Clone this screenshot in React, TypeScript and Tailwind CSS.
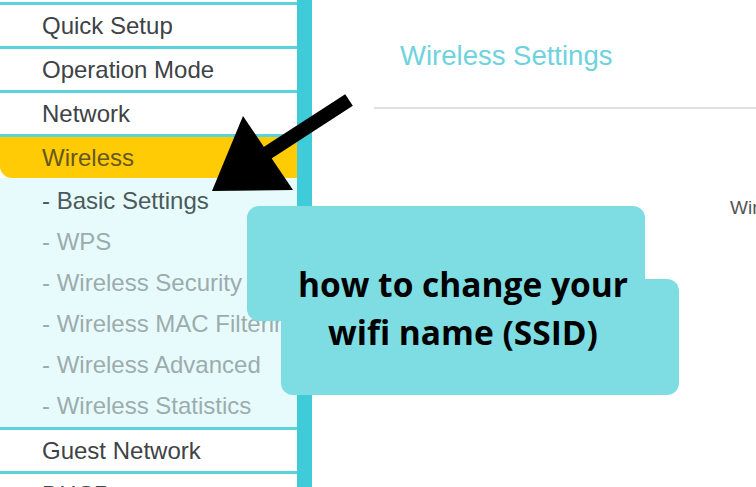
const menuTop = ["Quick Setup", "Operation Mode", "Network"];

const subItems = [
  { label: "- Basic Settings", active: true },
  { label: "- WPS" },
  { label: "- Wireless Security" },
  { label: "- Wireless MAC Filtering" },
  { label: "- Wireless Advanced" },
  { label: "- Wireless Statistics" },
];

const Line = () => <div className="h-[3px] bg-[#5cd2dd] shrink-0" />;

const Row = ({ label }: { label: string }) => (
  <div className="h-[41px] shrink-0 flex items-center pl-[42px] text-[24px] leading-none text-[#3d4346] whitespace-nowrap">
    {label}
  </div>
);

export default function App() {
  return (
    <div className="relative w-[756px] h-[487px] overflow-hidden bg-white flex font-['Liberation_Sans',Arial,sans-serif]">
      {/* Sidebar menu */}
      <aside className="w-[297px] shrink-0 flex flex-col pt-[2px] overflow-hidden">
        <Line />
        {menuTop.map((m) => (
          <div key={m}>
            <Row label={m} />
            <Line />
          </div>
        ))}
        <div className="h-[41px] shrink-0 flex items-center pl-[42px] text-[24px] leading-none text-[#65571f] bg-[#ffcb05] rounded-bl-[12px]">
          Wireless
        </div>
        <div className="bg-[#e8fbfc] pt-[2px] pb-[1px] flex flex-col">
          {subItems.map((s) => (
            <div
              key={s.label}
              className={
                s.active
                  ? "h-[41px] flex items-center pl-[42px] text-[24px] leading-none whitespace-nowrap text-[#4b5a5b]"
                  : "h-[41px] flex items-center pl-[42px] text-[24px] leading-none whitespace-nowrap text-[#9cacad]"
              }
            >
              {s.label}
            </div>
          ))}
        </div>
        <Line />
        <Row label="Guest Network" />
        <Line />
        <Row label="DHCP" />
      </aside>
      <div className="w-[15px] shrink-0 bg-[#3fcbd8]" />

      {/* Main content */}
      <main className="flex-1 min-w-0 overflow-hidden">
        <h1 className="mt-[42px] pl-[88px] text-[27.5px] leading-[28px] text-[#6ed3dc] whitespace-nowrap">
          Wireless Settings
        </h1>
        <div className="mt-[37px] ml-[62px] h-[2px] bg-[#e0e0e0]" />
        <div className="mt-[89px] pl-[418px] text-[19px] leading-[19px] text-[#555] whitespace-nowrap">
          Wireless Network Name:
        </div>
      </main>

      {/* Arrow */}
      <svg className="absolute left-0 top-0 pointer-events-none" width="756" height="487" viewBox="0 0 756 487">
        <line x1="255" y1="161" x2="349" y2="100" stroke="#000" strokeWidth="14" />
        <polygon points="243,116 212,191 293,190" fill="#000" />
      </svg>

      {/* Callout */}
      <div className="absolute left-[247px] top-[206px] w-[398px] h-[115px] rounded-[12px] bg-[#7edde3]" />
      <div className="absolute left-[281px] top-[279px] w-[398px] h-[116px] rounded-[12px] bg-[#7edde3]" />
      <div className="absolute left-[247px] top-[260px] w-[432px] text-center font-['Open_Sans',sans-serif] font-bold text-[33.5px] leading-[48px] text-black">
        <div>how to change your</div>
        <div>wifi name (SSID)</div>
      </div>
    </div>
  );
}
